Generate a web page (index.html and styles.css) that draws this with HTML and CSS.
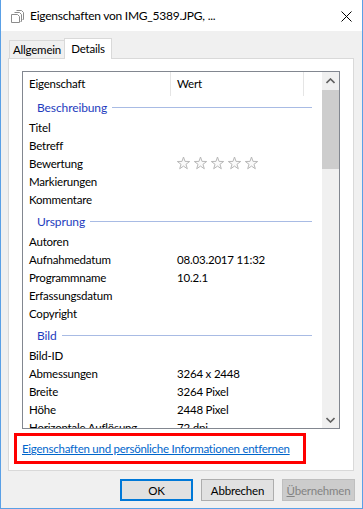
FILE: index.html
```html
<!DOCTYPE html>
<html lang="de">
<head>
<meta charset="utf-8">
<title>Eigenschaften</title>
<link rel="stylesheet" href="styles.css">
</head>
<body>
<div class="window">
  <div class="titlebar">
    <svg class="app-icon" width="13" height="13" viewBox="0 0 13 13">
      <path d="M5.5 0.5h5l2 2v7h-1" fill="none" stroke="#8c8c8c"/>
      <path d="M3.5 2.5h5l2 2v7h-1" fill="#fff" stroke="#8c8c8c"/>
      <path d="M0.5 4.5h6l2 2v6h-8z" fill="#fff" stroke="#8c8c8c"/>
    </svg>
    <span class="title">Eigenschaften von IMG_5389.JPG, ...</span>
    <svg class="close" width="11" height="11" viewBox="0 0 11 11">
      <path d="M0.5 0.5L10.5 10.5M10.5 0.5L0.5 10.5" stroke="#000" stroke-width="1"/>
    </svg>
  </div>

  <div class="tabs">
    <div class="tab">Allgemein</div>
    <div class="tab active">Details</div>
  </div>

  <div class="panel">
    <div class="listbox">
      <div class="list">
        <div class="list-header">
          <div class="hcol name">Eigenschaft</div>
          <div class="hcol value">Wert</div>
        </div>

        <div class="group first"><span>Beschreibung</span><i></i></div>
        <div class="row"><span class="k">Titel</span><span class="v"></span></div>
        <div class="row"><span class="k">Betreff</span><span class="v"></span></div>
        <div class="row"><span class="k">Bewertung</span><span class="v">
          <svg class="stars" width="85" height="14" viewBox="0 0 85 14">
            <defs>
              <polygon id="st" points="6.5,0.5 8.03,4.9 12.68,4.99 8.97,7.8 10.32,12.26 6.5,9.6 2.68,12.26 4.03,7.8 0.32,4.99 4.97,4.9"/>
            </defs>
            <use href="#st" x="0" y="0.5"/>
            <use href="#st" x="17" y="0.5"/>
            <use href="#st" x="34" y="0.5"/>
            <use href="#st" x="51" y="0.5"/>
            <use href="#st" x="68" y="0.5"/>
          </svg>
        </span></div>
        <div class="row"><span class="k">Markierungen</span><span class="v"></span></div>
        <div class="row"><span class="k">Kommentare</span><span class="v"></span></div>

        <div class="group"><span>Ursprung</span><i></i></div>
        <div class="row"><span class="k">Autoren</span><span class="v"></span></div>
        <div class="row"><span class="k">Aufnahmedatum</span><span class="v">08.03.2017 11:32</span></div>
        <div class="row"><span class="k">Programmname</span><span class="v">10.2.1</span></div>
        <div class="row"><span class="k">Erfassungsdatum</span><span class="v"></span></div>
        <div class="row"><span class="k">Copyright</span><span class="v"></span></div>

        <div class="group"><span>Bild</span><i></i></div>
        <div class="row"><span class="k">Bild-ID</span><span class="v"></span></div>
        <div class="row"><span class="k">Abmessungen</span><span class="v">3264 x 2448</span></div>
        <div class="row"><span class="k">Breite</span><span class="v">3264 Pixel</span></div>
        <div class="row"><span class="k">Höhe</span><span class="v">2448 Pixel</span></div>
        <div class="row"><span class="k">Horizontale Auflösung</span><span class="v">72 dpi</span></div>
      </div>
      <div class="scrollbar">
        <div class="sb-btn">
          <svg width="9" height="6" viewBox="0 0 9 6"><path d="M0.5 5L4.5 1L8.5 5" fill="none" stroke="#606060" stroke-width="1.6"/></svg>
        </div>
        <div class="sb-track"><div class="sb-thumb"></div></div>
        <div class="sb-btn">
          <svg width="9" height="6" viewBox="0 0 9 6"><path d="M0.5 1L4.5 5L8.5 1" fill="none" stroke="#606060" stroke-width="1.6"/></svg>
        </div>
      </div>
    </div>

    <div class="linkbox">
      <a class="link" href="#">Eigenschaften und persönliche Informationen entfernen</a>
    </div>
  </div>

  <div class="buttons">
    <button class="btn default">OK</button>
    <button class="btn">Abbrechen</button>
    <button class="btn disabled"><u>Ü</u>bernehmen</button>
  </div>
</div>
</body>
</html>
```

FILE: styles.css
```css
* { box-sizing: border-box; }

html, body {
  margin: 0;
  padding: 0;
  background: #fff;
}

body {
  font-family: Lato, "Liberation Sans", sans-serif;
  font-size: 11.5px;
  letter-spacing: -0.2px;
  color: #000;
}

.window {
  width: 363px;
  height: 509px;
  border: 1px solid #5aa0e6;
  border-top: 0;
  background: #f0f0f0;
  display: flex;
  flex-direction: column;
}

.titlebar {
  height: 31px;
  flex: none;
  background: #fff;
  display: flex;
  align-items: center;
  padding-left: 10px;
  padding-right: 10px;
}

.app-icon {
  flex: none;
  margin-top: 1px;
}

.title {
  margin-left: 6px;
  font-size: 12px;
  letter-spacing: -0.25px;
  flex: 1;
}

.close {
  flex: none;
  margin-top: 1px;
}

.tabs {
  height: 27px;
  flex: none;
  display: flex;
  align-items: flex-end;
  padding-left: 8px;
}

.tab {
  height: 18px;
  border: 1px solid #d9d9d9;
  border-bottom: 0;
  background: #f0f0f0;
  line-height: 17px;
  width: 56px;
  text-align: center;
  white-space: nowrap;
}

.tab.active {
  height: 21px;
  width: 48px;
  margin-left: -1px;
  margin-bottom: -1px;
  background: #fff;
  position: relative;
  z-index: 1;
  line-height: 19px;
}

.panel {
  height: 413px;
  flex: none;
  margin: 0 8px 0 7px;
  border: 1px solid #d9d9d9;
  background: #fff;
  padding: 12px 0 0 13px;
  display: flex;
  flex-direction: column;
}

.listbox {
  width: 318px;
  height: 358px;
  flex: none;
  border: 1px solid #828790;
  display: flex;
  overflow: hidden;
}

.list {
  flex: 1;
  overflow: hidden;
}

.list-header {
  height: 24px;
  display: flex;
}

.hcol {
  height: 24px;
  line-height: 24px;
  padding-left: 6px;
  border-right: 1px solid #e5e5e5;
}

.hcol.name { width: 148px; }
.hcol.value { width: 133px; }

.group {
  height: 22px;
  display: flex;
  align-items: center;
  padding-left: 14px;
  padding-right: 10px;
  margin-top: 2px;
  color: #1e3cbe;
  font-size: 12px;
  letter-spacing: -0.1px;
}

.group.first { margin-top: 0; }

.group i {
  flex: 1;
  height: 1px;
  margin-left: 5px;
  background: #a8bbe4;
}

.row {
  height: 18px;
  display: flex;
  align-items: center;
}

.row .k {
  width: 148px;
  padding-left: 6px;
  white-space: nowrap;
  flex: none;
}

.row .v {
  padding-left: 6px;
  white-space: nowrap;
  display: flex;
  align-items: center;
}

.stars {
  fill: #fafafa;
  stroke: #b8b8b8;
  stroke-width: 1;
}

.scrollbar {
  width: 17px;
  flex: none;
  background: #f0f0f0;
  display: flex;
  flex-direction: column;
}

.sb-btn {
  height: 17px;
  flex: none;
  display: flex;
  align-items: center;
  justify-content: center;
}

.sb-track {
  flex: 1;
  padding-top: 1px;
}

.sb-thumb {
  height: 79px;
  background: #cdcdcd;
}

.linkbox {
  width: 292px;
  height: 31px;
  margin: 4px 0 0 -8px;
  border: 3px solid #ff0000;
  display: flex;
  align-items: center;
  padding-left: 5px;
}

.link {
  color: #0066cc;
  text-decoration: underline;
  white-space: nowrap;
  letter-spacing: -0.25px;
}

.buttons {
  display: flex;
  justify-content: flex-end;
  gap: 8px;
  padding-right: 7px;
  margin-top: 8px;
}

.btn {
  width: 73px;
  height: 22px;
  padding: 0;
  font-family: inherit;
  font-size: 11.5px;
  letter-spacing: -0.2px;
  color: #000;
  background: #e1e1e1;
  border: 1px solid #adadad;
  border-radius: 0;
}

.btn.default {
  border: 2px solid #0078d7;
}

.btn.disabled {
  background: #cccccc;
  border-color: #bfbfbf;
  color: #838383;
}
```
